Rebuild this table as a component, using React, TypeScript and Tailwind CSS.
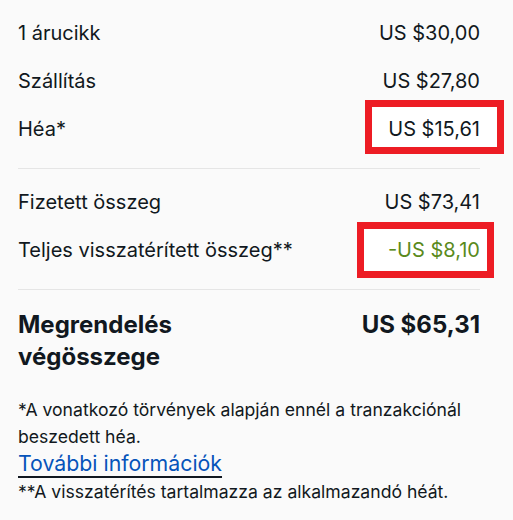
const Row = ({ label, value, valueClass = "", box }: { label: string; value: string; valueClass?: string; box?: string }) => (
  <div className="flex h-12 items-center justify-between">
    <span className="leading-6">{label}</span>
    <span className={`relative leading-6 ${valueClass}`}>
      {box && <span className={`absolute border-[7px] border-[#ed1c24] bg-white ${box}`} />}
      <span className="relative">{value}</span>
    </span>
  </div>
);

export default function App() {
  return (
    <div
      className="min-h-[520px] w-[513px] bg-[#fafafa] pl-[18px] pr-[33px] text-[20px] text-[#111820]"
      style={{ fontFamily: "Inter, 'Noto Sans', sans-serif" }}
    >
      <div className="border-b border-[#e5e5e5] pt-[9px] pb-[15px]">
        <Row label="1 árucikk" value="US $30,00" />
        <Row label="Szállítás" value="US $27,80" />
        <Row label="Héa*" value="US $15,61" box="-left-[23px] -right-[24px] -top-[17px] -bottom-[13px]" />
      </div>
      <div className="border-b border-[#e5e5e5] pt-[9px] pb-[15px]">
        <Row label="Fizetett összeg" value="US $73,41" />
        <Row
          label="Teljes visszatérített összeg**"
          value="-US $8,10"
          valueClass="text-[#5a8a1c]"
          box="-left-[31px] -right-[14px] -top-[16px] -bottom-[16px]"
        />
      </div>
      <div className="flex justify-between pt-[19px] text-[24px] font-bold leading-8">
        <span>
          Megrendelés
          <br />
          végösszege
        </span>
        <span>US $65,31</span>
      </div>
      <div className="pt-[23px] text-[17.6px] leading-[27px]">
        <p>*A vonatkozó törvények alapján ennél a tranzakciónál beszedett héa.</p>
        <a href="#" className="text-[21.3px] text-[#0654ba] underline decoration-[#111820] decoration-2 underline-offset-[5px]">
          További információk
        </a>
        <p>**A visszatérítés tartalmazza az alkalmazandó héát.</p>
      </div>
    </div>
  );
}
